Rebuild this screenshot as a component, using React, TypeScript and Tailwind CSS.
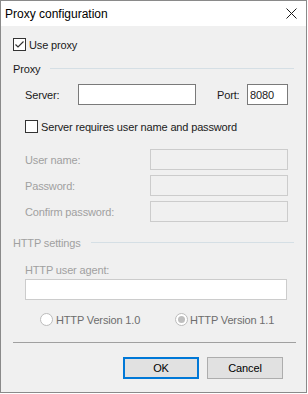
import React from "react";

const font = { fontFamily: '"Liberation Sans", Arial, sans-serif' };

function CheckBox({ checked = false }: { checked?: boolean }) {
  return (
    <span className="w-[13px] h-[13px] border border-[#333333] bg-white flex items-center justify-center shrink-0">
      {checked && (
        <svg width="11" height="11" viewBox="0 0 11 11">
          <path d="M1.5 5.5 L4 8 L9.5 2.5" fill="none" stroke="#333333" strokeWidth="1.2" />
        </svg>
      )}
    </span>
  );
}

function Radio({ selected = false }: { selected?: boolean }) {
  return (
    <span className="w-[13px] h-[13px] rounded-full border border-[#bcbcbc] bg-white flex items-center justify-center shrink-0">
      {selected && <span className="w-[7px] h-[7px] rounded-full bg-[#bfbfbf]" />}
    </span>
  );
}

function GroupHeader({ label, disabled = false }: { label: string; disabled?: boolean }) {
  return (
    <div className="flex items-center h-[14px]">
      <span className={disabled ? "text-[#a0a0a0]" : "text-[#1a1a1a]"}>{label}</span>
      <div className="flex-1 h-px bg-[#d5dfe5] ml-[10px] -mt-[2px]" />
    </div>
  );
}

function DisabledField({ label }: { label: string }) {
  return (
    <div className="flex items-center h-[21px] pl-[12px]">
      <span className="w-[125px] text-[#a0a0a0]">{label}</span>
      <div className="w-[138px] h-[21px] border border-[#cccccc] bg-[#f0f0f0]" />
    </div>
  );
}

export default function App() {
  return (
    <div className="w-[308px] h-[394px] bg-white text-[11px] leading-[14px] tracking-[-0.15px]" style={font}>
      <div className="w-[307px] h-[393px] border border-[#8a8a8a] bg-[#f0f0f0] flex flex-col">
        {/* Title bar */}
        <div className="h-[25px] bg-white flex items-center justify-between pl-[4px] pr-[9px]">
          <span className="text-[12px] tracking-normal text-black">Proxy configuration</span>
          <svg width="11" height="11" viewBox="0 0 11 11">
            <path d="M0.5 0.5 L10.5 10.5 M10.5 0.5 L0.5 10.5" stroke="#1a1a1a" strokeWidth="1" />
          </svg>
        </div>

        <div className="flex flex-col px-[12px] text-[#1a1a1a]">
          <label className="flex items-center gap-[3px] mt-[12px] h-[13px]">
            <CheckBox checked />
            <span>Use proxy</span>
          </label>

          <div className="mt-[11px]">
            <GroupHeader label="Proxy" />
          </div>

          <div className="flex items-center h-[21px] mt-[8px] pl-[12px]">
            <span className="w-[53px]">Server:</span>
            <div className="w-[118px] h-[21px] border border-[#7a7a7a] bg-white" />
            <span className="ml-[21px] w-[30px]">Port:</span>
            <div className="w-[41px] h-[21px] border border-[#7a7a7a] bg-white flex items-center pl-[2px]">8080</div>
          </div>

          <label className="flex items-center gap-[3px] mt-[15px] h-[13px] pl-[12px]">
            <CheckBox />
            <span>Server requires user name and password</span>
          </label>

          <div className="flex flex-col gap-[5px] mt-[16px]">
            <DisabledField label="User name:" />
            <DisabledField label="Password:" />
            <DisabledField label="Confirm password:" />
          </div>

          <div className="mt-[14px]">
            <GroupHeader label="HTTP settings" disabled />
          </div>

          <div className="mt-[13px] pl-[12px] text-[#a0a0a0]">HTTP user agent:</div>
          <div className="mt-[2px] ml-[12px] w-[262px] h-[21px] border border-[#cccccc] bg-white" />

          <div className="flex items-center h-[13px] mt-[13px] pl-[27px] text-[#6d6d6d]">
            <span className="flex items-center gap-[3px] w-[135px]">
              <Radio />
              <span>HTTP Version 1.0</span>
            </span>
            <span className="flex items-center gap-[2px]">
              <Radio selected />
              <span>HTTP Version 1.1</span>
            </span>
          </div>

          <div className="mt-[16px] w-[283px] h-px bg-[#a0a0a0]" />

          <div className="flex justify-end gap-[8px] mt-[14px] pr-[11px]">
            <button className="w-[76px] h-[22px] border-2 border-[#0078d7] bg-[#e1e1e1] text-black">OK</button>
            <button className="w-[76px] h-[22px] border border-[#adadad] bg-[#e1e1e1] text-black">Cancel</button>
          </div>
        </div>
      </div>
    </div>
  );
}
